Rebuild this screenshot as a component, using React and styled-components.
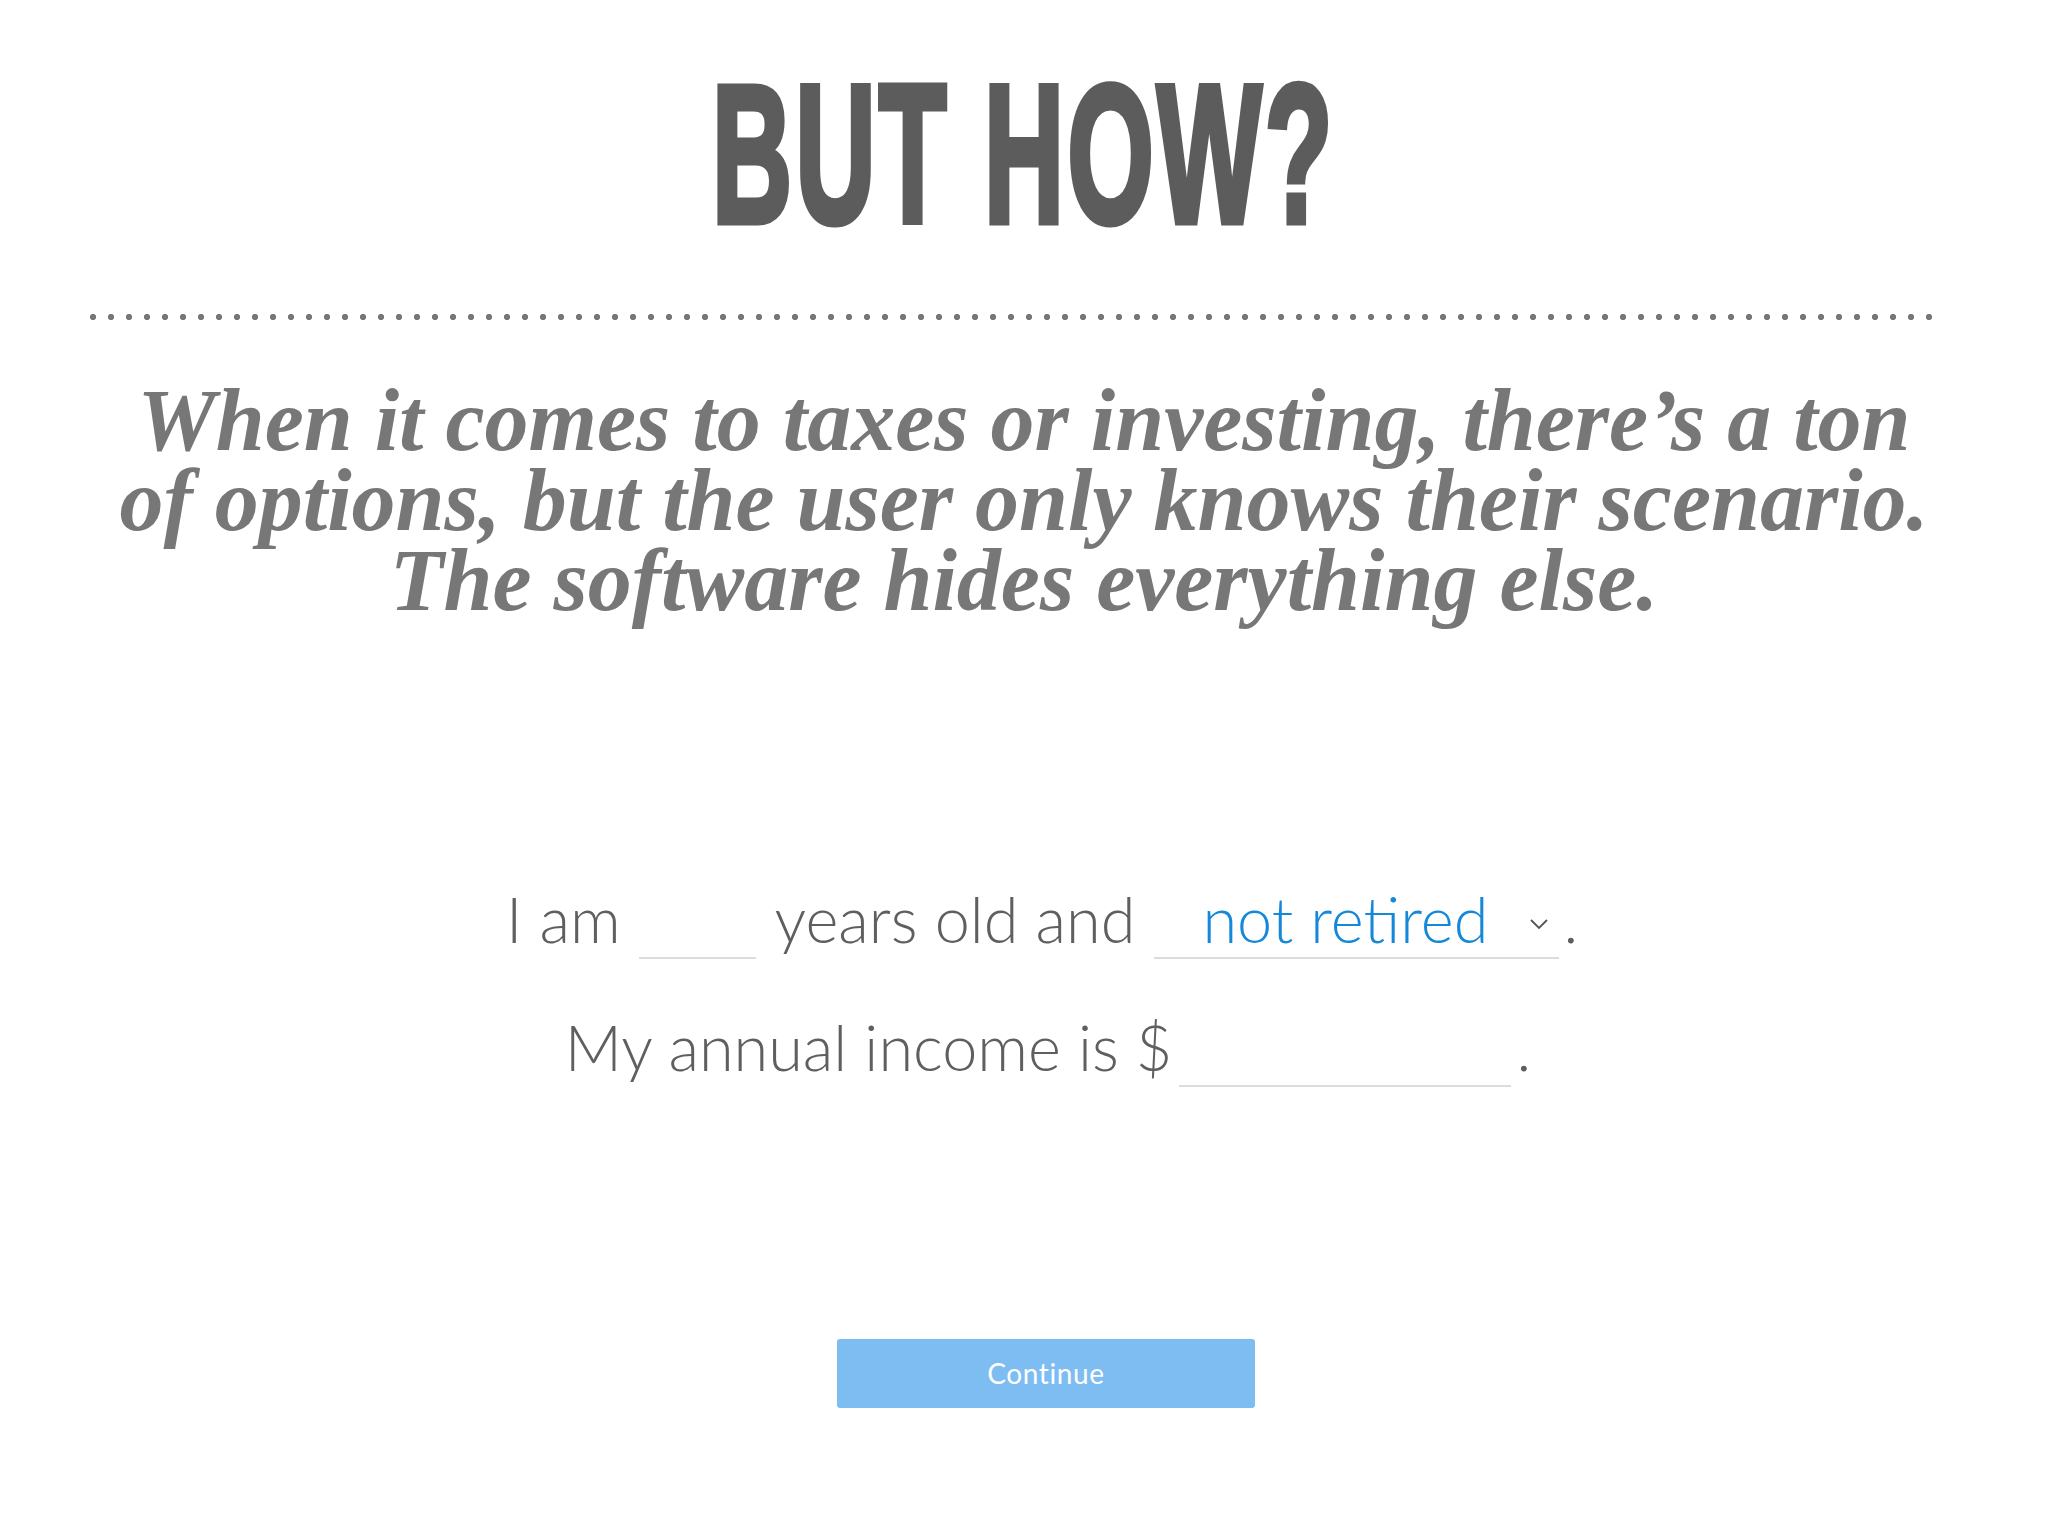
import React from 'react';
import styled, { createGlobalStyle } from 'styled-components';

const GlobalStyle = createGlobalStyle`
  html, body {
    margin: 0;
    padding: 0;
    background: #ffffff;
  }
  body {
    font-family: "Lato", "Liberation Sans", sans-serif;
  }
`;

const Page = styled.main`
  width: 2048px;
  min-height: 1536px;
  padding-top: 58px;
  box-sizing: border-box;
  display: flex;
  flex-direction: column;
  align-items: center;
`;

const Title = styled.h1`
  margin: 0;
  height: 198px;
  display: flex;
  justify-content: center;
  width: 100%;
`;

const TitleText = styled.span`
  display: inline-block;
  font-family: "Liberation Sans", Arial, sans-serif;
  font-weight: 700;
  font-size: 196px;
  line-height: 194px;
  color: #5c5c5c;
  -webkit-text-stroke: 7px #5c5c5c;
  letter-spacing: 6px;
  transform: scaleX(0.565);
  transform-origin: center;
  white-space: nowrap;
`;

const Divider = styled.div`
  align-self: flex-start;
  margin: 57px 0 0 84px;
  width: 1854px;
  height: 8px;
  background-image: radial-gradient(circle, #777777 2.8px, transparent 3.4px);
  background-size: 18px 8px;
  background-repeat: repeat-x;
`;

const Lead = styled.p`
  margin: 60px 0 0;
  font-family: "Liberation Serif", "Times New Roman", serif;
  font-style: italic;
  font-weight: 700;
  font-size: 88px;
  line-height: 80px;
  color: #777777;
  text-align: center;
`;

const Form = styled.section`
  margin-top: 258px;
  padding-left: 36px;
  display: flex;
  flex-direction: column;
  align-items: center;
  gap: 48px;
`;

const Sentence = styled.div`
  display: flex;
  align-items: baseline;
  margin-left: ${(p) => p.$shift || 0}px;
  font-family: "Lato", "Open Sans", sans-serif;
  font-weight: 300;
  font-size: 63px;
  line-height: 80px;
  color: #5f5f5f;
  white-space: nowrap;
`;

const Words = styled.span`
  margin-right: ${(p) => p.$gap ?? 18}px;
  margin-left: ${(p) => p.$lead ?? 0}px;
`;

const Blank = styled.span`
  display: inline-flex;
  align-items: baseline;
  justify-content: space-between;
  width: ${(p) => p.$width}px;
  padding-left: ${(p) => p.$pad || 0}px;
  margin-left: ${(p) => p.$lead || 0}px;
  box-sizing: border-box;
  border-bottom: 2px solid #dcdcdc;
  height: 80px;
  color: #1588d9;
`;

const Chevron = styled.svg`
  width: 20px;
  height: 12px;
  margin-right: 10px;
  align-self: center;
  margin-top: 12px;
`;

const Stop = styled.span`
  margin-left: ${(p) => p.$gap || 4}px;
`;

const ContinueButton = styled.button`
  margin-top: 252px;
  margin-left: 44px;
  width: 418px;
  height: 69px;
  border: none;
  border-radius: 3px;
  background: #7ebdf1;
  color: #ffffff;
  font-family: "Lato", "Open Sans", sans-serif;
  font-weight: 400;
  font-size: 28px;
  letter-spacing: 0.6px;
  padding-bottom: 3px;
  cursor: pointer;
`;

export default function App() {
  return (
    <>
      <GlobalStyle />
      <Page>
        <Title>
          <TitleText>BUT HOW?</TitleText>
        </Title>
        <Divider />
        <Lead>
          When it comes to taxes or investing, there’s a ton
          <br />
          of options, but the user only knows their scenario.
          <br />
          The software hides everything else.
        </Lead>
        <Form>
          <Sentence>
            <Words>I am</Words>
            <Blank $width={117}>{'\u00a0'}</Blank>
            <Words $gap={0} $lead={19}>years old and</Words>
            <Blank $width={405} $pad={48} $lead={19}>
              <span>not retired</span>
              <Chevron viewBox="0 0 20 12" fill="none">
                <polyline points="2,2 10,10 18,2" stroke="#555" strokeWidth="1.8" />
              </Chevron>
            </Blank>
            <Stop>.</Stop>
          </Sentence>
          <Sentence $shift={12}>
            <Words $gap={7}>My annual income is $</Words>
            <Blank $width={332}>{'\u00a0'}</Blank>
            <Stop $gap={5}>.</Stop>
          </Sentence>
        </Form>
        <ContinueButton>Continue</ContinueButton>
      </Page>
    </>
  );
}
